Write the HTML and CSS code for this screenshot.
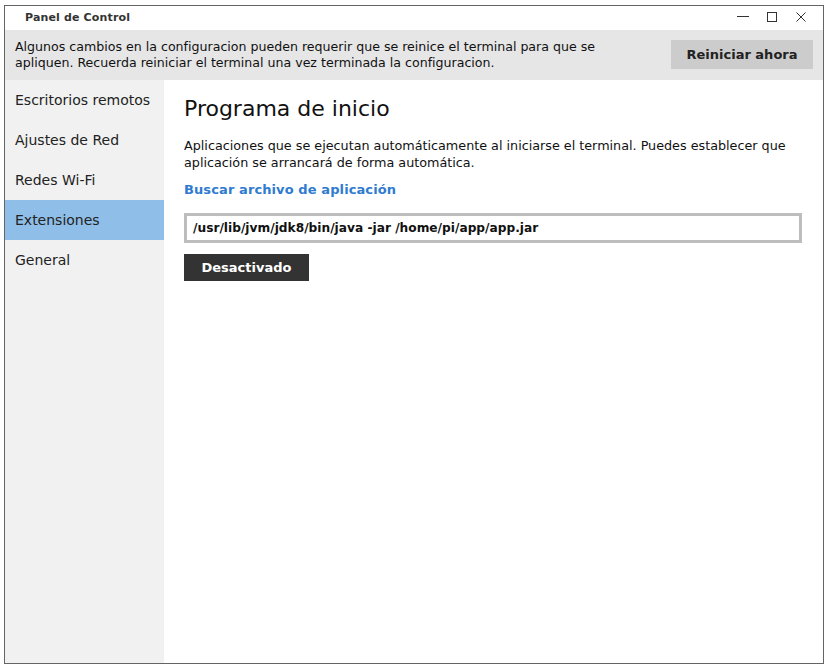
FILE: index.html
```html
<!DOCTYPE html>
<html lang="es">
<head>
<meta charset="utf-8">
<title>Panel de Control</title>
<link rel="stylesheet" href="styles.css">
</head>
<body>
<div class="window">
  <div class="titlebar">
    <span class="title">Panel de Control</span>
    <div class="controls">
      <svg class="ctl" width="14" height="14" viewBox="0 0 14 14"><path d="M1 6.5h12" stroke="#333" stroke-width="1"/></svg>
      <svg class="ctl" width="14" height="14" viewBox="0 0 14 14"><rect x="2.5" y="2.5" width="9" height="9" fill="none" stroke="#333" stroke-width="1"/></svg>
      <svg class="ctl" width="14" height="14" viewBox="0 0 14 14"><path d="M2.5 2.5l9 9M11.5 2.5l-9 9" stroke="#333" stroke-width="1"/></svg>
    </div>
  </div>
  <div class="notice">
    <p class="notice-text">Algunos cambios en la configuracion pueden requerir que se reinice el terminal para que se apliquen. Recuerda reiniciar el terminal una vez terminada la configuracion.</p>
    <button class="restart">Reiniciar ahora</button>
  </div>
  <div class="body">
    <nav class="sidebar">
      <div class="item">Escritorios remotos</div>
      <div class="item">Ajustes de Red</div>
      <div class="item">Redes Wi-Fi</div>
      <div class="item active">Extensiones</div>
      <div class="item">General</div>
    </nav>
    <main class="content">
      <h1 class="heading">Programa de inicio</h1>
      <p class="desc">Aplicaciones que se ejecutan automáticamente al iniciarse el terminal. Puedes establecer que aplicación se arrancará de forma automática.</p>
      <a class="link">Buscar archivo de aplicación</a>
      <div class="field">/usr/lib/jvm/jdk8/bin/java -jar /home/pi/app/app.jar</div>
      <button class="toggle">Desactivado</button>
    </main>
  </div>
</div>
</body>
</html>
```

FILE: styles.css
```css
* { box-sizing: border-box; }
html, body { margin: 0; padding: 0; background: #ffffff; }
body {
  font-family: "DejaVu Sans", sans-serif;
  color: #111;
  padding: 5px 6px 5px 4px;
  height: 669px;
}
.window {
  height: 659px;
  border: 1px solid #646464;
  display: flex;
  flex-direction: column;
  background: #fff;
}
.titlebar {
  height: 24px;
  display: flex;
  align-items: center;
  justify-content: space-between;
  padding-left: 20px;
  padding-right: 15px;
  flex: none;
}
.title {
  font-size: 11px;
  font-weight: bold;
  color: #333;
  letter-spacing: 0.15px;
  margin-top: -2px;
}
.controls { display: flex; gap: 15px; margin-top: -2px; }
.ctl { display: block; }
.notice {
  height: 50px;
  background: #e6e6e6;
  display: flex;
  align-items: center;
  justify-content: space-between;
  padding: 0 10px 0 10px;
  flex: none;
}
.notice-text {
  margin: 0 0 0 0;
  font-size: 12.6px;
  line-height: 16px;
  width: 600px;
  color: #111;
}
.restart {
  font-family: inherit;
  font-size: 13px;
  font-weight: bold;
  background: #cccccc;
  color: #222;
  border: none;
  width: 142px;
  height: 29px;
  padding: 0;
  margin-top: -2px;
}
.body {
  flex: 1;
  display: flex;
}
.sidebar {
  width: 159px;
  background: #f1f1f1;
  flex: none;
}
.item {
  height: 40px;
  display: flex;
  align-items: center;
  padding-left: 10px;
  font-size: 14px;
  color: #222;
}
.item.active { background: #8fbfe9; }
.content {
  flex: 1;
  padding: 14px 21px 0 20px;
}
.heading {
  margin: 0;
  font-size: 22px;
  font-weight: normal;
  line-height: 30px;
  color: #111;
}
.desc {
  margin: 13px 0 0 0;
  font-size: 12.75px;
  line-height: 17px;
  color: #111;
}
.link {
  display: block;
  margin-top: 11px;
  font-size: 13px;
  font-weight: bold;
  color: #2f7bd0;
  letter-spacing: 0.1px;
}
.field {
  margin-top: 16px;
  height: 30px;
  border: 3px solid #bdbdbd;
  display: flex;
  align-items: center;
  padding-left: 6px;
  font-size: 12.2px;
  font-weight: bold;
  color: #111;
}
.toggle {
  display: block;
  margin-top: 11px;
  font-family: inherit;
  font-size: 13px;
  font-weight: bold;
  background: #333333;
  color: #fff;
  border: none;
  width: 125px;
  height: 27px;
  padding: 0;
}
```
